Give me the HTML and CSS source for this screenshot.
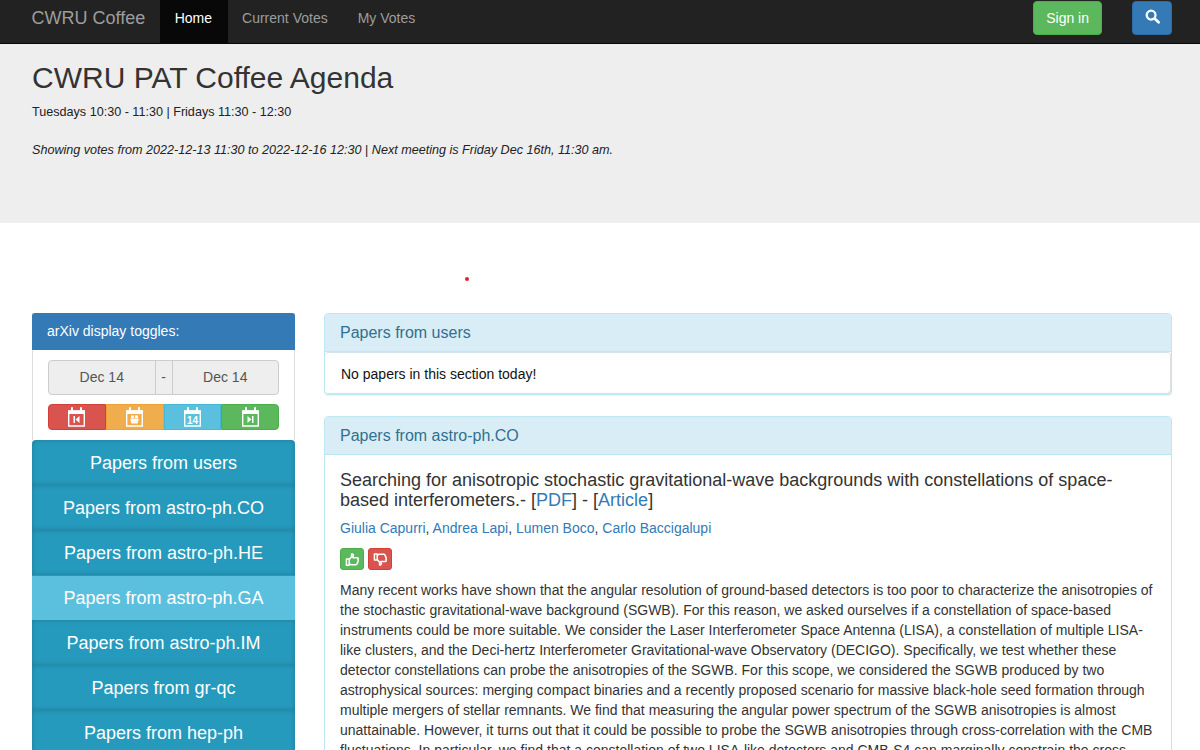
FILE: index.html
```html
<!DOCTYPE html>
<html lang="en">
<head>
<meta charset="utf-8">
<title>CWRU Coffee</title>
<link rel="stylesheet" href="styles.css">
</head>
<body>
<nav class="navbar">
  <a class="brand" href="#">CWRU Coffee</a>
  <a class="nav-link active" href="#">Home</a>
  <a class="nav-link" href="#">Current Votes</a>
  <a class="nav-link" href="#">My Votes</a>
  <div class="nav-actions">
    <a class="btn-signin" href="#">Sign in</a>
    <a class="btn-search" href="#" aria-label="Search">
      <svg viewBox="0 0 16 16" width="15" height="15"><circle cx="6.500" cy="6.500" r="4.700" fill="none" stroke="#fff" stroke-width="2.400"/><path d="M10.200 10.200l4.300 4" stroke="#fff" stroke-width="2.800" stroke-linecap="round"/></svg>
    </a>
  </div>
</nav>
<header class="jumbotron">
  <h1>CWRU PAT Coffee Agenda</h1>
  <p class="times">Tuesdays 10:30 - 11:30 | Fridays 11:30 - 12:30</p>
  <p class="showing"><em>Showing votes from 2022-12-13 11:30 to 2022-12-16 12:30</em> | <em>Next meeting is Friday Dec 16th, 11:30 am.</em></p>
</header>
<div class="spacer"><span class="dot"></span></div>
<div class="content">
  <aside class="sidebar">
    <div class="toggle-panel">
      <div class="toggle-heading">arXiv display toggles:</div>
      <div class="toggle-body">
        <div class="date-range">
          <span class="date">Dec 14</span><span class="sep">-</span><span class="date">Dec 14</span>
        </div>
        <div class="day-btns">
          <a class="day red" href="#"><svg class="cal" viewBox="0 0 19 20"><use href="#cal-base"/><path d="M6.500 9h1.500v7H6.500zM12.500 9v7L8.500 12.500z" fill="#fff"/></svg></a>
          <a class="day orange" href="#"><svg class="cal" viewBox="0 0 19 20"><use href="#cal-base"/><path d="M5.500 11.500h8v1.500l-1 3.500h-6l-1-3.500zM6 8.500h3v2.500H6zM10 8.500h3v2.500h-3z" fill="#fff"/></svg></a>
          <a class="day blue" href="#"><svg class="cal" viewBox="0 0 19 20"><use href="#cal-base"/><text x="9.500" y="17" text-anchor="middle" class="cal-num">14</text></svg></a>
          <a class="day green" href="#"><svg class="cal" viewBox="0 0 19 20"><use href="#cal-base"/><path d="M11 9h1.500v7H11zM6.500 9v7l4-3.500z" fill="#fff"/></svg></a>
        </div>
      </div>
    </div>
    <ul class="side-nav">
      <li><a href="#">Papers from users</a></li>
      <li><a href="#">Papers from astro-ph.CO</a></li>
      <li><a href="#">Papers from astro-ph.HE</a></li>
      <li class="current"><a href="#">Papers from astro-ph.GA</a></li>
      <li><a href="#">Papers from astro-ph.IM</a></li>
      <li><a href="#">Papers from gr-qc</a></li>
      <li><a href="#">Papers from hep-ph</a></li>
    </ul>
  </aside>
  <main class="main">
    <section class="panel">
      <h2 class="panel-heading">Papers from users</h2>
      <div class="panel-body empty">No papers in this section today!</div>
    </section>
    <section class="panel">
      <h2 class="panel-heading">Papers from astro-ph.CO</h2>
      <div class="panel-body paper">
        <h3 class="paper-title">Searching for anisotropic stochastic gravitational-wave backgrounds with constellations of space-based interferometers.- <span class="bracket">[<a href="#">PDF</a>] - [<a href="#">Article</a>]</span></h3>
        <p class="authors"><a href="#">Giulia Capurri</a>, <a href="#">Andrea Lapi</a>, <a href="#">Lumen Boco</a>, <a href="#">Carlo Baccigalupi</a></p>
        <div class="votes">
          <a class="vote up" href="#" aria-label="Vote up"><svg viewBox="0 0 16 16" width="15" height="15"><path d="M1.500 7.500h3v6.500h-3zM4.500 8l2.500-3V2.200c1.500-.4 2.300.8 1.800 2.300L8.300 6h4.700c1.300 0 1.500 1.300.8 1.900.7.600.5 1.600-.2 2 .3.700.1 1.500-.6 1.800.2 1-.4 1.800-1.400 1.800H7c-1 0-1.700-.4-2.500-.8" fill="none" stroke="#fff" stroke-width="1.600" stroke-linejoin="round"/></svg></a>
          <a class="vote down" href="#" aria-label="Vote down"><svg viewBox="0 0 16 16" width="15" height="15"><path d="M1.500 8.500h3V2h-3zM4.500 8L7 11v2.800c1.500.4 2.300-.8 1.800-2.300L8.300 10h4.700c1.300 0 1.500-1.300.8-1.900.7-.6.5-1.600-.2-2 .3-.7.1-1.500-.6-1.800.2-1-.4-1.800-1.400-1.800H7c-1 0-1.700.4-2.500.8" fill="none" stroke="#fff" stroke-width="1.600" stroke-linejoin="round"/></svg></a>
        </div>
        <p class="abstract">Many recent works have shown that the angular resolution of ground-based detectors is too poor to characterize the anisotropies of the stochastic gravitational-wave background (SGWB). For this reason, we asked ourselves if a constellation of space-based instruments could be more suitable. We consider the Laser Interferometer Space Antenna (LISA), a constellation of multiple LISA-like clusters, and the Deci-hertz Interferometer Gravitational-wave Observatory (DECIGO). Specifically, we test whether these detector constellations can probe the anisotropies of the SGWB. For this scope, we considered the SGWB produced by two astrophysical sources: merging compact binaries and a recently proposed scenario for massive black-hole seed formation through multiple mergers of stellar remnants. We find that measuring the angular power spectrum of the SGWB anisotropies is almost unattainable. However, it turns out that it could be possible to probe the SGWB anisotropies through cross-correlation with the CMB fluctuations. In particular, we find that a constellation of two LISA-like detectors and CMB-S4 can marginally constrain the cross-correlation.</p>
      </div>
    </section>
  </main>
</div>
<svg class="defs" width="0" height="0" aria-hidden="true"><defs><g id="cal-base"><path d="M1.700 4h15.600v15H1.700z" fill="none" stroke="#fff" stroke-width="1.400"/><path d="M1 3.500h17V7H1z" fill="#fff"/><path d="M5 1v3.500M14 1v3.500" stroke="#fff" stroke-width="2" stroke-linecap="round"/></g></defs></svg>
</body>
</html>
```
FILE: styles.css
```css
* { box-sizing: border-box; }
html, body { margin: 0; padding: 0; }
body { font-family: "Liberation Sans", Arial, sans-serif; font-size: 14px; line-height: 20px; color: #333; background: #fff; }
a { text-decoration: none; color: #337ab7; }
.defs { position: absolute; }

.navbar { display: flex; align-items: stretch; height: 44px; background: #222; border-bottom: 1px solid #080808; padding-left: 31.500px; padding-right: 28px; }
.brand { font-size: 18px; color: #9d9d9d; line-height: 36px; margin-right: 14.500px; }
.nav-link { color: #9d9d9d; padding: 0 15px; line-height: 36px; height: 43px; }
.nav-link.active { background: #080808; color: #fff; padding-right: 16px; margin-right: -1px; }
.nav-actions { margin-left: auto; display: flex; align-items: flex-start; gap: 30px; padding-top: 1px; }
.btn-signin { background: #5cb85c; border: 1px solid #4cae4c; color: #fff; border-radius: 4px; height: 34px; line-height: 32px; padding: 0 12px; }
.btn-search { background: #337ab7; border: 1px solid #2e6da4; border-radius: 4px; width: 40px; height: 34px; display: flex; align-items: center; justify-content: center; padding-bottom: 3px; }

.jumbotron { background: #eee; height: 179px; padding: 17px 32px 0; }
.jumbotron h1 { font-size: 30px; font-weight: 400; line-height: 33px; margin: 0 0 10px; color: #333; }
.times, .showing { font-size: 12.600px; line-height: 17px; margin: 0 0 21px; color: #222; }
.spacer { height: 90px; padding-top: 54px; padding-left: 465px; }
.dot { display: block; width: 4px; height: 4px; border-radius: 50%; background: #e8202a; }

.content { display: flex; align-items: flex-start; padding: 0 28px 0 32px; gap: 29px; }
.sidebar { width: 263px; flex: none; }
.toggle-panel { background: #fff; border-left: 1px solid #ddd; border-right: 1px solid #ddd; }
.toggle-heading { background: #337ab7; color: #fff; height: 37px; line-height: 36px; padding-left: 15px; margin: 0 -1px; border-radius: 3px 3px 0 0; }
.toggle-body { padding: 10px 15px; }
.date-range { display: flex; height: 35px; background: #eee; border: 1px solid #ccc; border-radius: 4px; color: #555; line-height: 33px; text-align: center; }
.date { flex: 1; }
.sep { width: 18px; flex: none; border-left: 1px solid #ccc; border-right: 1px solid #ccc; }
.day-btns { display: flex; margin-top: 9px; height: 26px; }
.day { flex: 1; display: flex; align-items: center; justify-content: center; border: 1px solid; }
.day:first-child { border-radius: 4px 0 0 4px; }
.day:last-child { border-radius: 0 4px 4px 0; }
.red { background: #d9534f; border-color: #d43f3a; }
.orange { background: #f0ad4e; border-color: #eea236; }
.blue { background: #5bc0de; border-color: #46b8da; }
.green { background: #5cb85c; border-color: #4cae4c; }
.cal { width: 19px; height: 20px; margin-top: -1px; }
.cal-num { font-size: 10px; font-weight: 700; fill: #fff; }

.side-nav { list-style: none; margin: 0; padding: 0; }
.side-nav li { height: 45px; background: #269abc; box-shadow: inset 0 0 5px rgba(0,0,0,.2); }
.side-nav li:first-child { border-radius: 4px 4px 0 0; }
.side-nav a { display: block; color: #fff; font-size: 18px; padding-top: 2px; line-height: 43px; text-align: center; }
.side-nav li.current { background: #5bc0de; box-shadow: inset 0 1px 0 #269abc; }

.main { flex: 1; min-width: 0; }
.panel { border: 1px solid #bce8f1; border-radius: 4px; margin-bottom: 21px; background: #fff; box-shadow: 0 1px 1px rgba(0,0,0,.05); }
.panel-heading { background: #d9edf7; color: #31708f; font-size: 16px; font-weight: 400; line-height: 18px; margin: 0; padding: 10px 15px; height: 38px; border-bottom: 1px solid #bce8f1; border-radius: 3px 3px 0 0; }
.empty { color: #111; padding: 11px 16px 10px; height: 42px; border-top: 1px solid #d5e4ea; border-radius: 4px; box-shadow: inset -1px -1px 1px #ddd; }
.paper { padding: 15px; }
.paper-title { font-size: 18px; font-weight: 400; line-height: 20px; margin: 0 0 8px; color: #333; }
.authors { margin: 0 0 10px; }
.votes { display: flex; gap: 4px; margin-bottom: 10px; }
.vote { width: 24px; height: 22px; border-radius: 3px; border: 1px solid; display: flex; align-items: center; justify-content: center; }
.up { background: #5cb85c; border-color: #4cae4c; }
.down { background: #d9534f; border-color: #d43f3a; }
.abstract { margin: 0; color: #333; }
```
